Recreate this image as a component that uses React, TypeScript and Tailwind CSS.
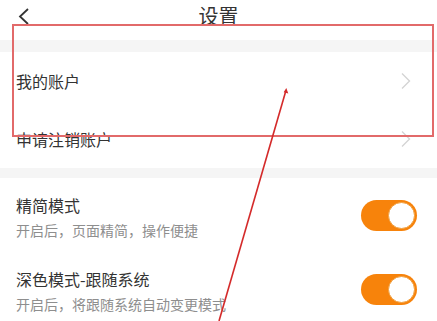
import React from 'react';

const Toggle: React.FC = () => (
  <div className="w-[56px] h-[31px] rounded-full bg-[#f7830b] flex items-center justify-end pr-[2px]">
    <div className="w-[27px] h-[27px] rounded-full bg-white border border-[#f0a040]" />
  </div>
);

const Chevron: React.FC = () => (
  <svg width="12" height="18" viewBox="0 0 12 18" fill="none">
    <path d="M2 1.5 L9.5 9 L2 16.5" stroke="#d4d4d4" strokeWidth="1.4" />
  </svg>
);

const LinkRow: React.FC<{ label: string }> = ({ label }) => (
  <div className="h-[58px] flex items-center justify-between pl-[16px] pr-[25px] bg-white">
    <span className="text-[16px] text-[#333]">{label}</span>
    <Chevron />
  </div>
);

const SwitchRow: React.FC<{ title: string; sub: string }> = ({ title, sub }) => (
  <div className="h-[74px] flex items-center justify-between pl-[16px] pr-[20px] bg-white">
    <div className="flex flex-col pt-[3px]">
      <span className="text-[16px] leading-[22px] text-[#333]">{title}</span>
      <span className="text-[14px] leading-[20px] mt-[4px] text-[#8e8e8e]">{sub}</span>
    </div>
    <Toggle />
  </div>
);

export default function App() {
  return (
    <div
      className="relative w-[437px] h-[321px] overflow-hidden bg-white"
      style={{ fontFamily: '"Noto Sans CJK SC", "Noto Sans", sans-serif' }}
    >
      <div className="relative h-[40px] flex items-center justify-center bg-white">
        <svg className="absolute left-[17px] top-[8px]" width="14" height="17" viewBox="0 0 14 17" fill="none">
          <path d="M11 1 L3 8.5 L11 16" stroke="#333" strokeWidth="1.8" />
        </svg>
        <span className="text-[20px] text-[#333] leading-none -mt-[8px]">设置</span>
      </div>
      <div className="h-[12px] bg-[#f5f5f5]" />
      <LinkRow label="我的账户" />
      <LinkRow label="申请注销账户" />
      <div className="h-[10px] bg-[#f5f5f5]" />
      <SwitchRow title="精简模式" sub="开启后，页面精简，操作便捷" />
      <SwitchRow title="深色模式-跟随系统" sub="开启后，将跟随系统自动变更模式" />

      <div className="absolute left-[12px] top-[24px] w-[422px] h-[113px] border-2 border-[#e26a6a]" />
      <svg className="absolute left-0 top-0" width="437" height="321" viewBox="0 0 437 321">
        <line x1="285.8" y1="91" x2="219" y2="321" stroke="#d42a2a" strokeWidth="1.6" />
        <path d="M286.3 88 L288.3 93.5 L283.7 92.3 Z" fill="#d42a2a" />
      </svg>
    </div>
  );
}
